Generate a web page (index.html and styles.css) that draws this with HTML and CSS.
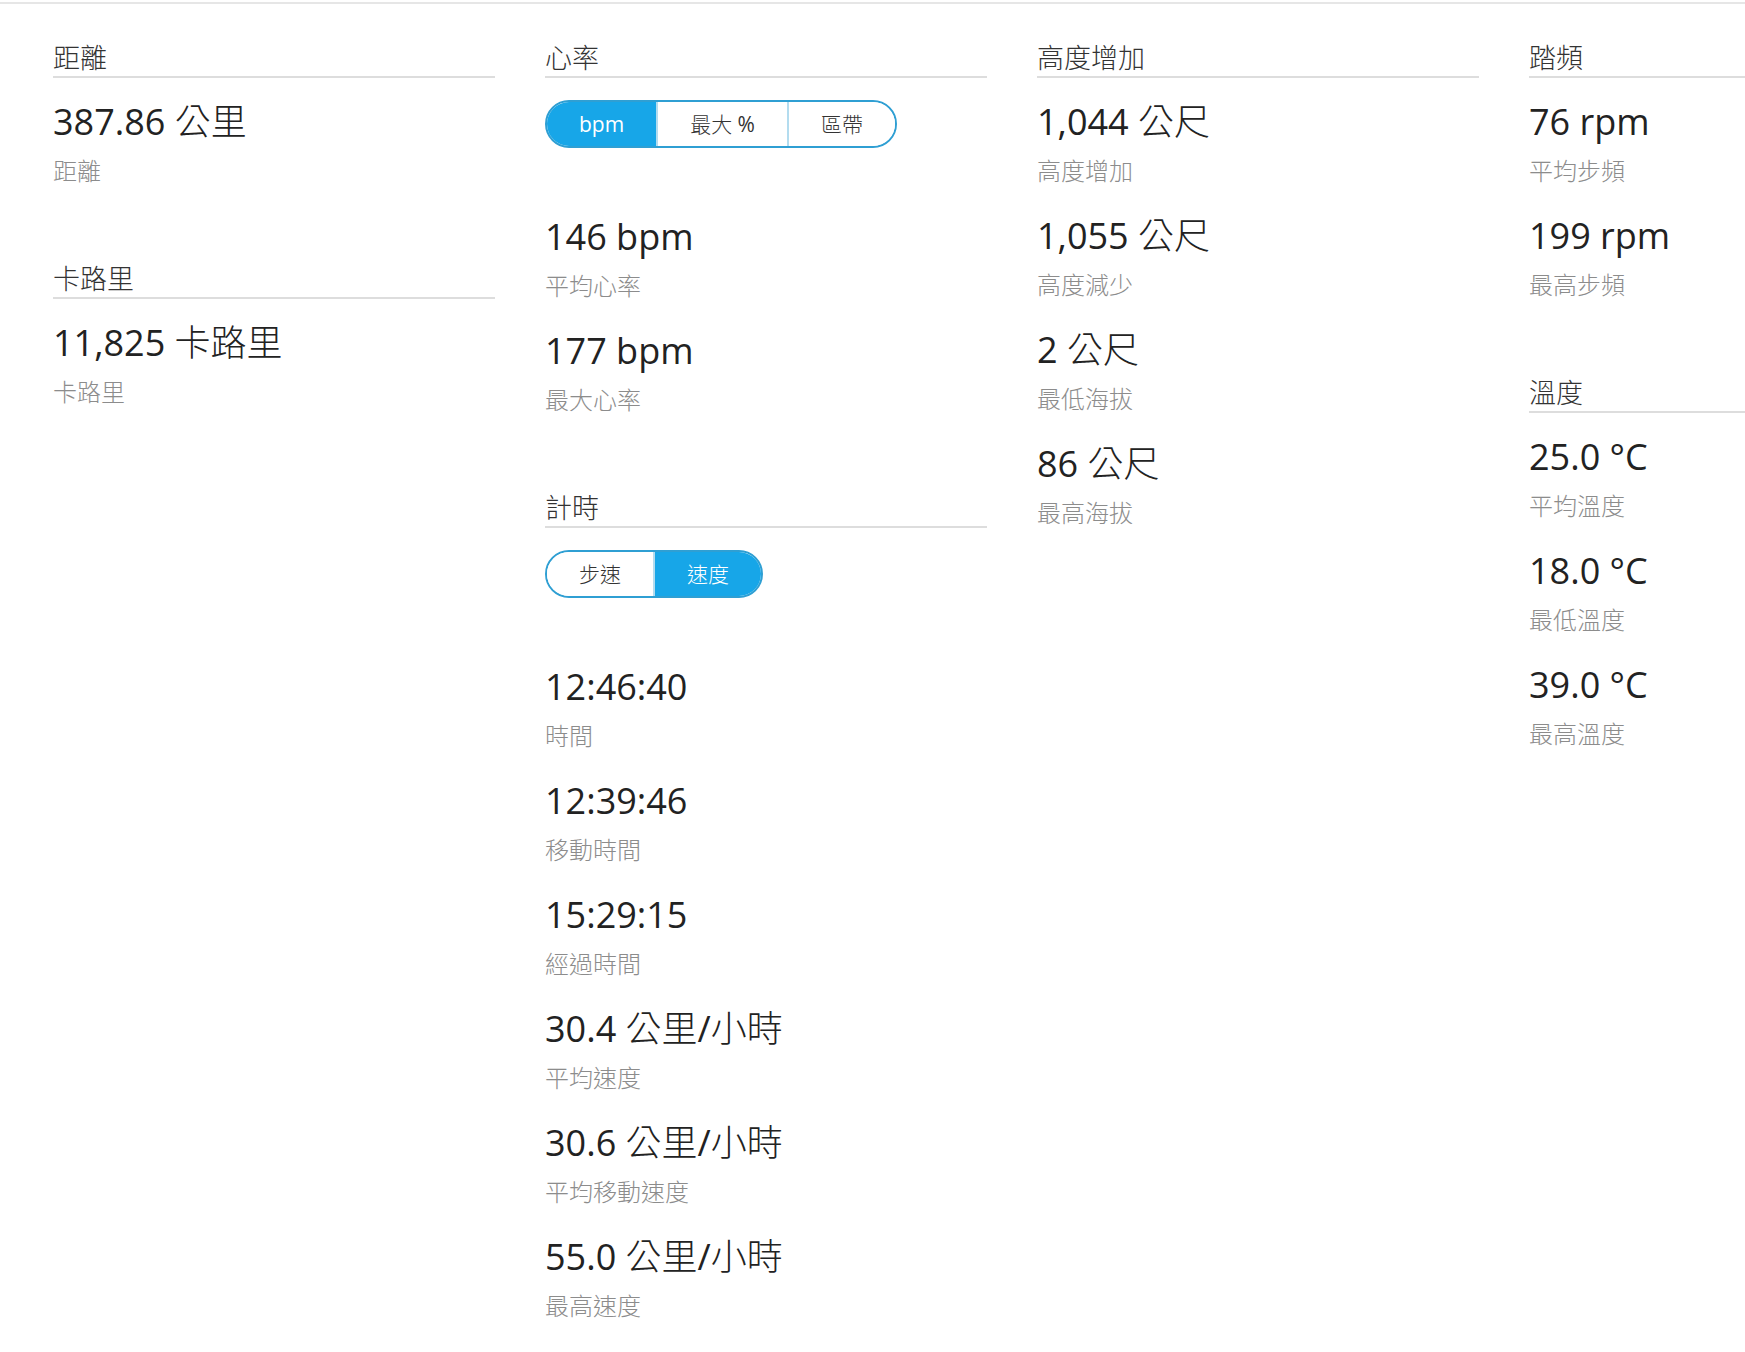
FILE: index.html
```html
<!DOCTYPE html>
<html lang="zh-Hant">
<head>
<meta charset="utf-8">
<title>統計</title>
<link rel="stylesheet" href="styles.css">
</head>
<body>
<div class="topbar"></div>
<div class="board">
  <div class="col">
    <section class="sec">
      <h3 class="sec-head">距離</h3>
      <div class="items">
        <div class="item"><div class="val">387.86 <span class="u">公里</span></div><div class="lbl">距離</div></div>
      </div>
    </section>
    <section class="sec">
      <h3 class="sec-head">卡路里</h3>
      <div class="items">
        <div class="item"><div class="val">11,825 <span class="u">卡路里</span></div><div class="lbl">卡路里</div></div>
      </div>
    </section>
  </div>

  <div class="col">
    <section class="sec">
      <h3 class="sec-head">心率</h3>
      <div class="toggle">
        <span class="seg on">bpm</span><span class="seg"><span class="u">最大</span> %</span><span class="seg"><span class="u">區帶</span></span>
      </div>
      <div class="items">
        <div class="item"><div class="val">146 bpm</div><div class="lbl">平均心率</div></div>
        <div class="item"><div class="val">177 bpm</div><div class="lbl">最大心率</div></div>
      </div>
    </section>
    <section class="sec">
      <h3 class="sec-head">計時</h3>
      <div class="toggle">
        <span class="seg"><span class="u">步速</span></span><span class="seg on"><span class="u">速度</span></span>
      </div>
      <div class="items">
        <div class="item"><div class="val">12:46:40</div><div class="lbl">時間</div></div>
        <div class="item"><div class="val">12:39:46</div><div class="lbl">移動時間</div></div>
        <div class="item"><div class="val">15:29:15</div><div class="lbl">經過時間</div></div>
        <div class="item"><div class="val">30.4 <span class="u">公里</span>/<span class="u">小時</span></div><div class="lbl">平均速度</div></div>
        <div class="item"><div class="val">30.6 <span class="u">公里</span>/<span class="u">小時</span></div><div class="lbl">平均移動速度</div></div>
        <div class="item"><div class="val">55.0 <span class="u">公里</span>/<span class="u">小時</span></div><div class="lbl">最高速度</div></div>
      </div>
    </section>
  </div>

  <div class="col">
    <section class="sec">
      <h3 class="sec-head">高度增加</h3>
      <div class="items">
        <div class="item"><div class="val">1,044 <span class="u">公尺</span></div><div class="lbl">高度增加</div></div>
        <div class="item"><div class="val">1,055 <span class="u">公尺</span></div><div class="lbl">高度減少</div></div>
        <div class="item"><div class="val">2 <span class="u">公尺</span></div><div class="lbl">最低海拔</div></div>
        <div class="item"><div class="val">86 <span class="u">公尺</span></div><div class="lbl">最高海拔</div></div>
      </div>
    </section>
  </div>

  <div class="col">
    <section class="sec">
      <h3 class="sec-head">踏頻</h3>
      <div class="items">
        <div class="item"><div class="val">76 rpm</div><div class="lbl">平均步頻</div></div>
        <div class="item"><div class="val">199 rpm</div><div class="lbl">最高步頻</div></div>
      </div>
    </section>
    <section class="sec">
      <h3 class="sec-head">溫度</h3>
      <div class="items">
        <div class="item"><div class="val">25.0 °C</div><div class="lbl">平均溫度</div></div>
        <div class="item"><div class="val">18.0 °C</div><div class="lbl">最低溫度</div></div>
        <div class="item"><div class="val">39.0 °C</div><div class="lbl">最高溫度</div></div>
      </div>
    </section>
  </div>
</div>
</body>
</html>
```

FILE: styles.css
```css
html, body {
  margin: 0;
  padding: 0;
  background: #ffffff;
}

body {
  font-family: "Open Sans", "Noto Sans CJK TC", "Noto Sans", sans-serif;
  color: #222222;
  overflow: hidden;
  width: 1745px;
  height: 1352px;
}

.topbar {
  height: 2px;
  margin-top: 2px;
  background: #e6e6e6;
}

.board {
  display: flex;
  gap: 50px;
  padding: 36px 0 0 53px;
}

.col {
  flex: none;
  width: 442px;
  display: flex;
  flex-direction: column;
  gap: 75px;
}

.sec {
  display: flex;
  flex-direction: column;
}

.sec-head {
  margin: 0;
  font-size: 27px;
  font-weight: 300;
  line-height: 36px;
  color: #333333;
  border-bottom: 2px solid #dddddd;
}

.items {
  display: flex;
  flex-direction: column;
  gap: 28px;
  padding-top: 22px;
}

.val {
  font-size: 36px;
  line-height: 44px;
  color: #222222;
  white-space: nowrap;
}

.u {
  font-weight: 300;
}

.lbl {
  margin-top: 12px;
  font-size: 24px;
  font-weight: 300;
  line-height: 30px;
  color: #8c8c8c;
}

.toggle {
  align-self: flex-start;
  display: flex;
  margin: 22px 0 45px;
  border: 2px solid #2f9fd3;
  border-radius: 24px;
  overflow: hidden;
}

.seg {
  padding: 0 32px;
  font-size: 21px;
  line-height: 44px;
  color: #333333;
  background: #ffffff;
}

.seg + .seg {
  border-left: 2px solid #b3dcef;
}

.seg.on {
  background: #17a6e8;
  color: #ffffff;
}
```
